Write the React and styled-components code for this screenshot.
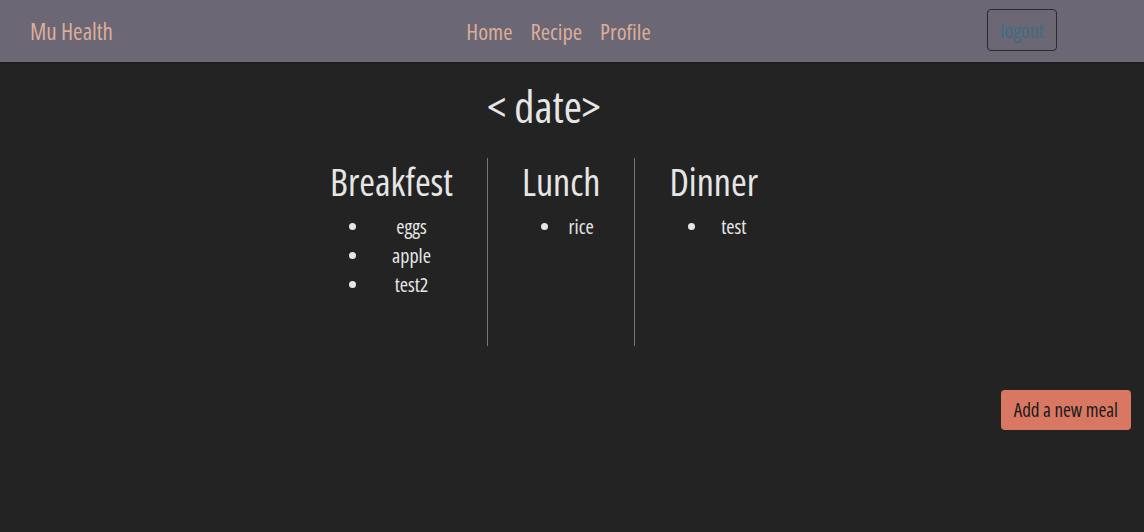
import styled, { createGlobalStyle } from "styled-components";

const GlobalStyle = createGlobalStyle`
  body {
    margin: 0;
    background-color: #232323;
    font-family: "Open Sans", sans-serif;
    font-stretch: 75%;
  }
`;

export default function App() {
  const meals = [
    { title: "Breakfest", items: ["eggs", "apple", "test2"] },
    { title: "Lunch", items: ["rice"] },
    { title: "Dinner", items: ["test"] },
  ];

  return (
    <>
      <GlobalStyle />
      <NavBar>
        <Brand>Mu Health</Brand>
        <NavLinks>
          <NavLink>Home</NavLink>
          <NavLink>Recipe</NavLink>
          <NavLink>Profile</NavLink>
        </NavLinks>
        <LogoutButton>logout</LogoutButton>
      </NavBar>
      <StyledMain>
        <DayView>
          <DateHeading>&lt; date&gt;</DateHeading>
          <MealGrid>
            {meals.map((meal, index) => (
              <MealColumn key={meal.title} $divider={index > 0}>
                <MealTitle>{meal.title}</MealTitle>
                <MealList>
                  {meal.items.map((item) => (
                    <MealItem key={item}>{item}</MealItem>
                  ))}
                </MealList>
              </MealColumn>
            ))}
          </MealGrid>
        </DayView>
        <ActionRow>
          <AddButton>Add a new meal</AddButton>
        </ActionRow>
      </StyledMain>
    </>
  );
}

const NavBar = styled.nav`
  height: 62px;
  background-color: #6c6775;
  border-bottom: 2px solid #1e1d22;
  display: grid;
  grid-template-columns: 1fr auto 1fr;
  align-items: center;
  padding: 0 87px 0 30px;
`;

const Brand = styled.span`
  color: #dcae99;
  font-size: 23px;
`;

const NavLinks = styled.div`
  display: flex;
  gap: 18px;
  padding-left: 30px;
`;

const NavLink = styled.a`
  color: #dcae99;
  font-size: 22.5px;
  cursor: pointer;
`;

const LogoutButton = styled.button`
  justify-self: end;
  width: 70px;
  height: 42px;
  background: transparent;
  border: 1px solid #2b2a31;
  border-radius: 4px;
  color: #3b6d80;
  font-family: inherit;
  font-stretch: inherit;
  font-size: 20px;
  margin-bottom: 2px;
`;

const StyledMain = styled.main`
  display: flex;
  flex-direction: column;
`;

const DayView = styled.section`
  display: flex;
  flex-direction: column;
  align-items: center;
  padding-right: 56px;
`;

const DateHeading = styled.h1`
  margin: 12px 0 0;
  color: #e6e6e6;
  font-size: 44px;
  font-weight: normal;
  line-height: 60px;
`;

const MealGrid = styled.div`
  display: flex;
  margin-top: 22px;
`;

const MealColumn = styled.div`
  height: 188px;
  padding: 0 34px;
  border-left: ${({ $divider }) => ($divider ? "1px solid #777" : "none")};
`;

const MealTitle = styled.h2`
  margin: 0;
  color: #e6e6e6;
  font-size: 38px;
  font-weight: normal;
  line-height: 46px;
  text-align: center;
`;

const MealList = styled.ul`
  margin: 8px 0 0;
  padding-left: 40px;
  color: #e6e6e6;
`;

const MealItem = styled.li`
  font-size: 20px;
  line-height: 29px;
  text-align: center;
`;

const ActionRow = styled.div`
  display: flex;
  justify-content: flex-end;
  padding: 44px 13px 0 0;
`;

const AddButton = styled.button`
  background-color: #d97862;
  border: none;
  border-radius: 4px;
  color: #1a1a1a;
  font-family: inherit;
  font-stretch: inherit;
  font-size: 19px;
  height: 40px;
  padding: 0 13px;
`;
